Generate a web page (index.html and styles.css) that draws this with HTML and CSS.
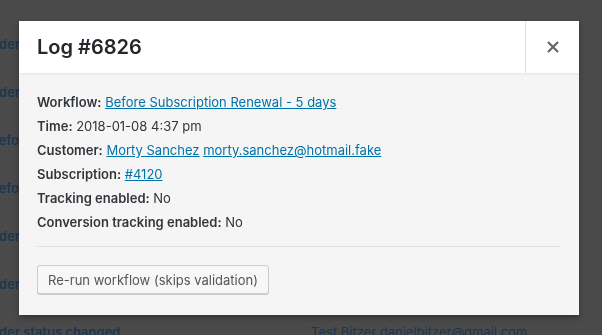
FILE: index.html
```html
<!DOCTYPE html>
<html>
  <head>
    <meta charset="utf-8">
    <link rel="stylesheet" href="styles.css">
  </head>
  <body>

    <div class="log-list">
      <div class="log-row"><span class="log-title">Order status changed</span><span class="log-customer">Test Bitzer danielbitzer@gmail.com</span></div>
      <div class="log-row"><span class="log-title">Order status changed</span><span class="log-customer">Test Bitzer danielbitzer@gmail.com</span></div>
      <div class="log-row"><span class="log-title log-title-before">Before Subscription Renewal</span><span class="log-customer">Morty Sanchez</span></div>
      <div class="log-row"><span class="log-title log-title-before">Before Subscription Renewal</span><span class="log-customer">Morty Sanchez</span></div>
      <div class="log-row"><span class="log-title">Order status changed</span><span class="log-customer">Test Bitzer danielbitzer@gmail.com</span></div>
      <div class="log-row"><span class="log-title">Order status changed</span><span class="log-customer">Test Bitzer danielbitzer@gmail.com</span></div>
      <div class="log-row"><span class="log-title">Order status changed</span><span class="log-customer">Test Bitzer danielbitzer@gmail.com</span></div>
    </div>

    <div class="modal">
      <div class="modal-header">
        <h1 class="modal-title">Log #6826</h1>
        <button class="modal-close" type="button">
          <svg width="12" height="12" viewBox="0 0 12 12"><path d="M1 1 L11 11 M11 1 L1 11" stroke="#666" stroke-width="2.2" fill="none"/></svg>
        </button>
      </div>

      <div class="modal-body">
        <ul class="log-details">
          <li><strong>Workflow:</strong> <a href="#">Before Subscription Renewal - 5 days</a></li>
          <li><strong>Time:</strong> 2018-01-08 4:37 pm</li>
          <li><strong>Customer:</strong> <a href="#">Morty Sanchez</a> <a href="#">morty.sanchez@hotmail.fake</a></li>
          <li><strong>Subscription:</strong> <a href="#">#4120</a></li>
          <li><strong>Tracking enabled:</strong> No</li>
          <li><strong>Conversion tracking enabled:</strong> No</li>
        </ul>

        <hr class="modal-sep">

        <button class="button" type="button">Re-run workflow (skips validation)</button>
      </div>
    </div>

  </body>
</html>
```

FILE: styles.css
```css
html, body {
  margin: 0;
  height: 100%;
  overflow: hidden;
}

body {
  background-color: #4a4a4a;
  font-family: Inter, "Liberation Sans", sans-serif;
  font-size: 13px;
  color: #333;
}

/* page behind the overlay */
.log-list {
  display: flex;
  flex-direction: column;
  padding-top: 20px;
}

.log-row {
  display: flex;
  align-items: center;
  height: 48px;
}

.log-title {
  width: 327px;
  margin-left: -16px;
  font-weight: 600;
  color: #1b3650;
  white-space: nowrap;
}

.log-title-before {
  margin-left: -10px;
  width: 321px;
}

.log-customer {
  color: #1b3650;
  white-space: nowrap;
}

/* modal */
.modal {
  position: fixed;
  left: 19px;
  top: 21px;
  width: 560px;
  background-color: #f5f5f5;
  box-shadow: 0 3px 6px rgba(0, 0, 0, 0.3);
}

.modal-header {
  display: flex;
  height: 52px;
  background-color: #fff;
  box-shadow: 0 1px 3px rgba(0, 0, 0, 0.07);
  position: relative;
}

.modal-title {
  flex: 1;
  margin: 0;
  padding-left: 18px;
  font-size: 20px;
  font-weight: 600;
  line-height: 52px;
  color: #23282d;
}

.modal-close {
  width: 54px;
  border: none;
  border-left: 1px solid #ddd;
  background: none;
  display: flex;
  align-items: center;
  justify-content: center;
  padding: 0;
}

.modal-body {
  padding: 17px 18px 21px;
}

.log-details {
  list-style: none;
  margin: 0;
  padding: 0;
}

.log-details li {
  line-height: 24px;
  white-space: nowrap;
}

.log-details strong {
  font-weight: 600;
  color: #32373c;
}

.log-details a {
  color: #0073aa;
}

.modal-sep {
  border: none;
  border-top: 1px solid #e1e1e1;
  margin: 12px 0 18px;
}

.button {
  display: block;
  height: 29px;
  padding: 0 10px;
  font-family: inherit;
  font-size: 13px;
  color: #555;
  background-color: #f7f7f7;
  border: 1px solid #ccc;
  border-radius: 3px;
  box-shadow: 0 1px 0 #ccc;
}
```
